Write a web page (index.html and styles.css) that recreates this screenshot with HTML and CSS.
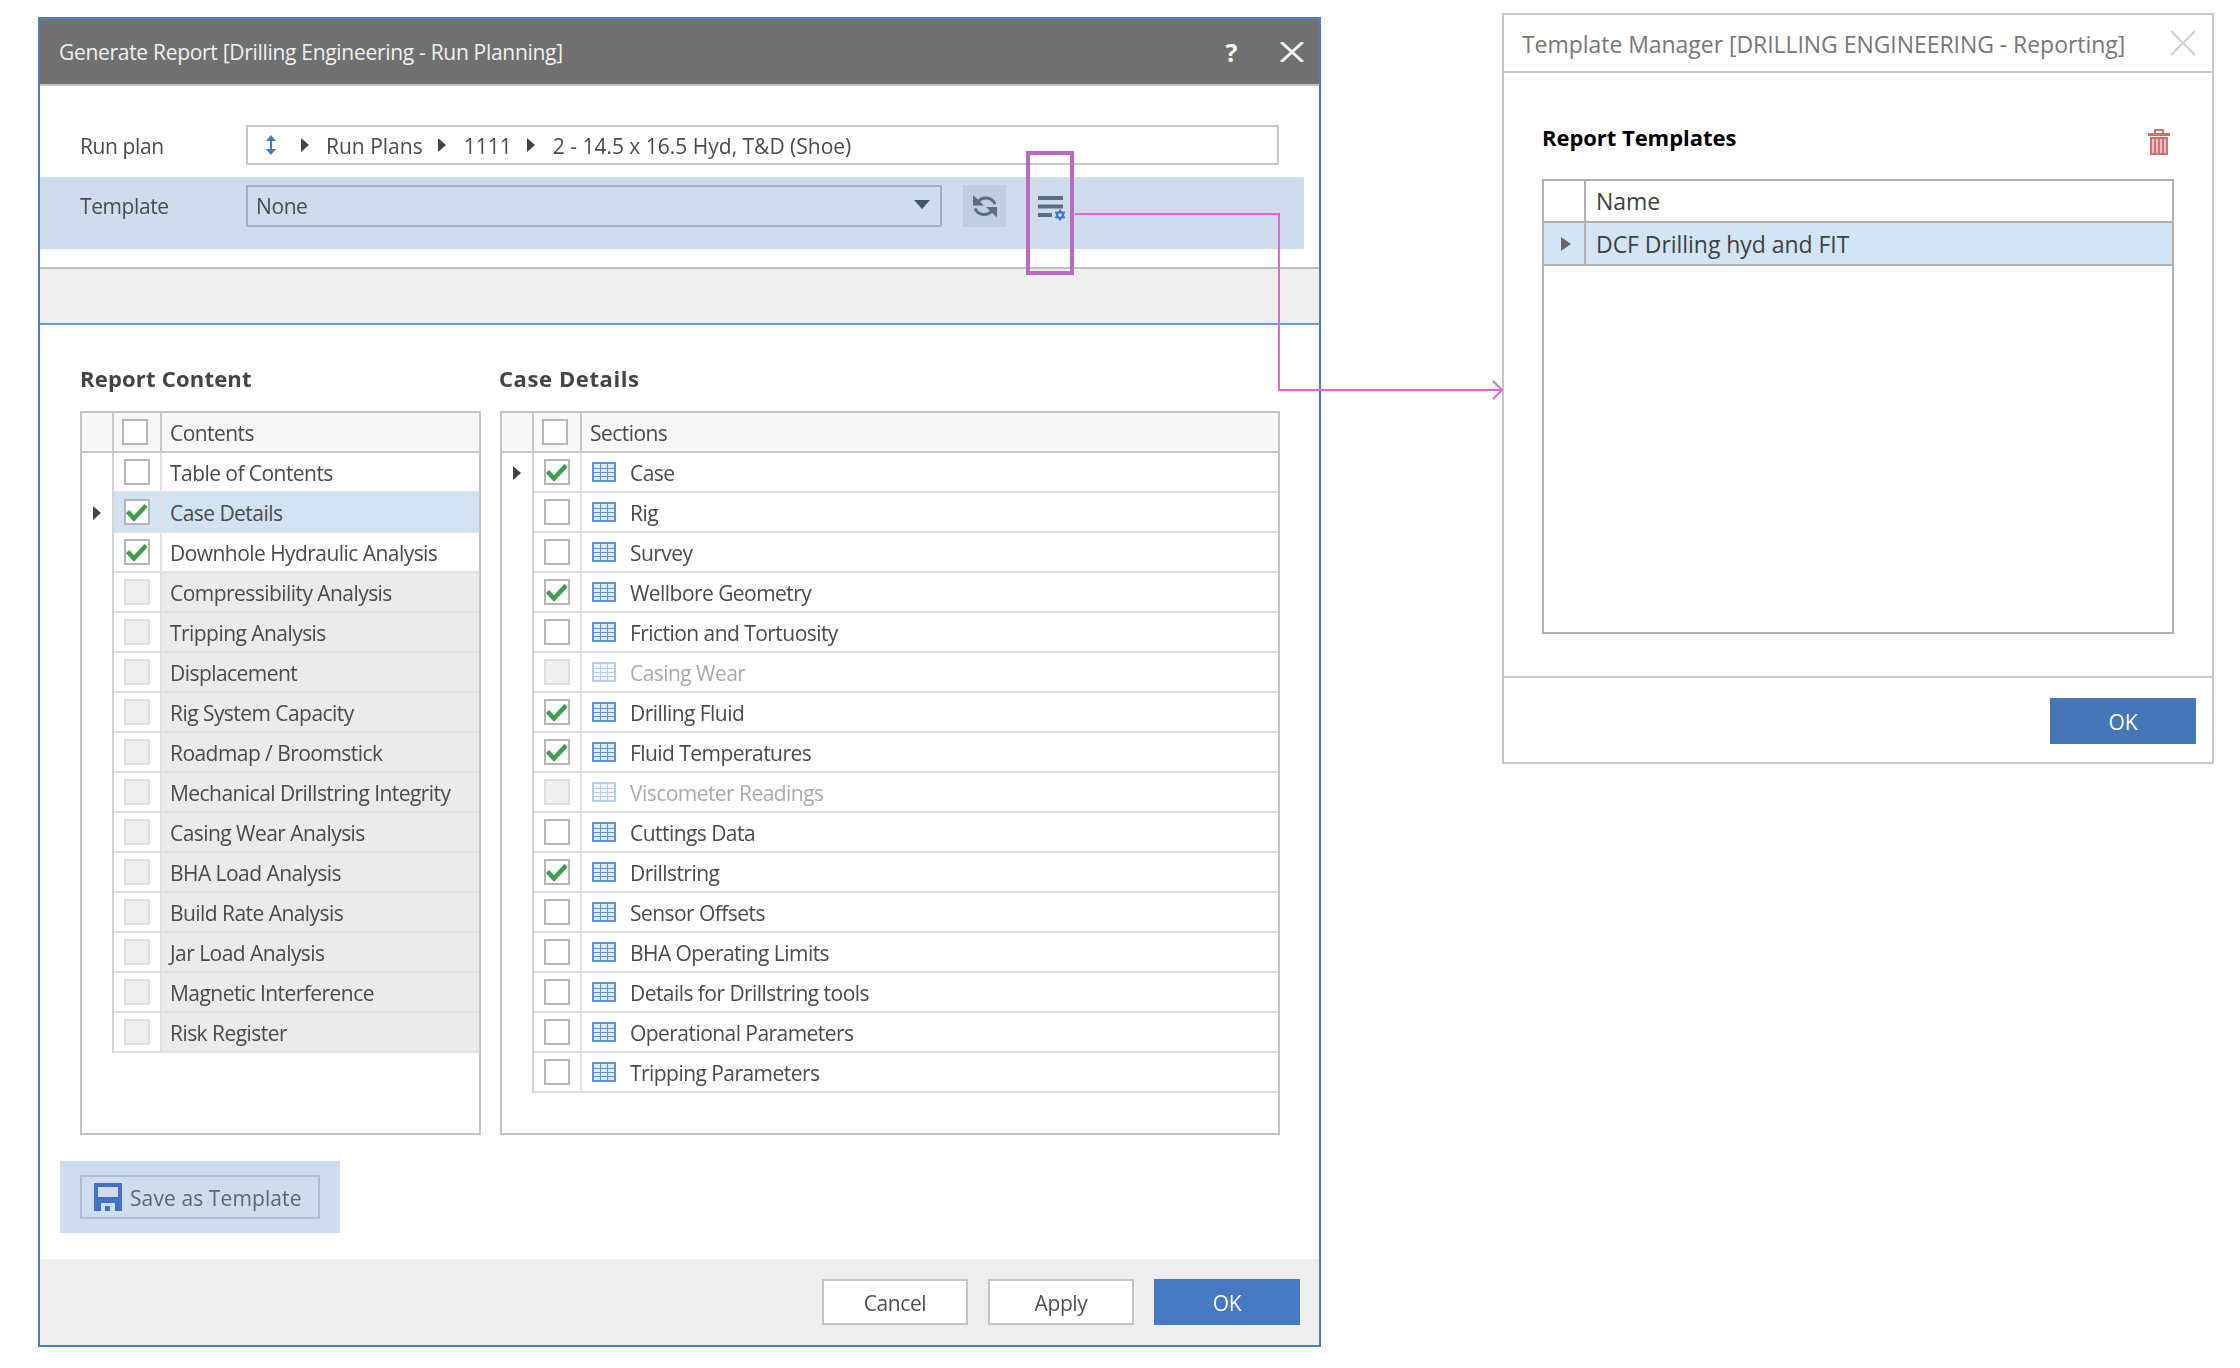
FILE: index.html
```html
<!DOCTYPE html>
<html lang="en">
<head>
    <meta charset="UTF-8">
    <title>Generate Report</title>
    <link rel="stylesheet" href="styles.css">
</head>
<body>
    <svg class="defs" width="0" height="0">
        <symbol id="table" viewBox="0 0 24 20">
            <rect x="0" y="0" width="24" height="20" fill="#5b92d8"/>
            <path d="M2 2h6v4H2zM9 2h6v4H9zM16 2h6v4h-6zM2 7h6v3H2zM9 7h6v3H9zM16 7h6v3h-6zM2 11h6v3H2zM9 11h6v3H9zM16 11h6v3h-6zM2 15h6v3H2zM9 15h6v3H9zM16 15h6v3h-6z" fill="#dfeafa"/>
        </symbol>
        <symbol id="tick" viewBox="0 0 22 22">
            <path d="M1.500 10.500L8 17.500 20 4.500" fill="none" stroke="#3f9e4e" stroke-width="4.500"/>
        </symbol>
    </svg>

    <div class="report-dialog">
        <div class="title-bar">
            <span class="title-text">Generate Report [Drilling Engineering - Run Planning]</span>
            <span class="help-btn">?</span>
            <svg class="close-btn" width="24" height="20" viewBox="0 0 24 20"><path d="M1 0l22 20M23 0L1 20" stroke="#f2f2f2" stroke-width="3" fill="none"/></svg>
        </div>

        <div class="run-row">
            <span class="field-label">Run plan</span>
            <div class="crumbs">
                <svg class="crumb-updown" width="12" height="20" viewBox="0 0 12 20"><path d="M6 0l5 6H7v8h4l-5 6-5-6h4V6H1z" fill="#3d7ad0"/></svg>
                <span class="crumb-arrow first"></span>
                <span class="crumb">Run Plans</span>
                <span class="crumb-arrow"></span>
                <span class="crumb">1111</span>
                <span class="crumb-arrow"></span>
                <span class="crumb">2 - 14.5 x 16.5 Hyd, T&amp;D (Shoe)</span>
            </div>
        </div>

        <div class="template-row">
            <span class="field-label">Template</span>
            <div class="combo"><span>None</span><i class="combo-arrow"></i></div>
            <div class="refresh-btn">
                <svg width="24" height="26" viewBox="0 0 24 26"><path d="M4.500 9.500A10 10 0 0 1 22 11M2 15.500A10 10 0 0 0 19.500 17" fill="none" stroke="#5d6d80" stroke-width="3"/><path d="M0 2V12.500H11ZM24 24.500V14H13Z" fill="#5d6d80"/></svg>
            </div>
            <div class="manage-btn">
                <svg width="30" height="26" viewBox="0 0 30 26"><path d="M1 3h25M1 11.500h25M1 20h14" stroke="#5d6d80" stroke-width="4" fill="none"/><path d="M23 14.500v11M18.200 17.200l9.600 5.600M18.200 22.800l9.600-5.600" stroke="#3d7ad0" stroke-width="2"/><circle cx="23" cy="20" r="4.200" fill="#3d7ad0"/><circle cx="23" cy="20" r="1.800" fill="#dce6f4"/></svg>
            </div>
        </div>

        <div class="info-band"></div>

        <div class="content">
            <div class="panels">
                <section class="panel panel-left">
                    <h3>Report Content</h3>
                    <div class="grid">
                        <div class="row head"><div class="cell-mark"></div><div class="cell-check"><span class="check"></span></div><div class="cell-label">Contents</div></div>
                        <div class="row"><div class="cell-mark"></div><div class="cell-check"><span class="check"></span></div><div class="cell-label">Table of Contents</div></div>
                        <div class="row selected"><div class="cell-mark"><i class="mark"></i></div><div class="cell-check"><span class="check"><svg width="22" height="22"><use href="#tick"/></svg></span></div><div class="cell-label">Case Details</div></div>
                        <div class="row"><div class="cell-mark"></div><div class="cell-check"><span class="check"><svg width="22" height="22"><use href="#tick"/></svg></span></div><div class="cell-label">Downhole Hydraulic Analysis</div></div>
                        <div class="row locked"><div class="cell-mark"></div><div class="cell-check"><span class="check"></span></div><div class="cell-label">Compressibility Analysis</div></div>
                        <div class="row locked"><div class="cell-mark"></div><div class="cell-check"><span class="check"></span></div><div class="cell-label">Tripping Analysis</div></div>
                        <div class="row locked"><div class="cell-mark"></div><div class="cell-check"><span class="check"></span></div><div class="cell-label">Displacement</div></div>
                        <div class="row locked"><div class="cell-mark"></div><div class="cell-check"><span class="check"></span></div><div class="cell-label">Rig System Capacity</div></div>
                        <div class="row locked"><div class="cell-mark"></div><div class="cell-check"><span class="check"></span></div><div class="cell-label">Roadmap / Broomstick</div></div>
                        <div class="row locked"><div class="cell-mark"></div><div class="cell-check"><span class="check"></span></div><div class="cell-label">Mechanical Drillstring Integrity</div></div>
                        <div class="row locked"><div class="cell-mark"></div><div class="cell-check"><span class="check"></span></div><div class="cell-label">Casing Wear Analysis</div></div>
                        <div class="row locked"><div class="cell-mark"></div><div class="cell-check"><span class="check"></span></div><div class="cell-label">BHA Load Analysis</div></div>
                        <div class="row locked"><div class="cell-mark"></div><div class="cell-check"><span class="check"></span></div><div class="cell-label">Build Rate Analysis</div></div>
                        <div class="row locked"><div class="cell-mark"></div><div class="cell-check"><span class="check"></span></div><div class="cell-label">Jar Load Analysis</div></div>
                        <div class="row locked"><div class="cell-mark"></div><div class="cell-check"><span class="check"></span></div><div class="cell-label">Magnetic Interference</div></div>
                        <div class="row locked"><div class="cell-mark"></div><div class="cell-check"><span class="check"></span></div><div class="cell-label">Risk Register</div></div>
                    </div>
                </section>

                <section class="panel panel-right">
                    <h3>Case Details</h3>
                    <div class="grid">
                        <div class="row head"><div class="cell-mark"></div><div class="cell-check"><span class="check"></span></div><div class="cell-label">Sections</div></div>
                        <div class="row"><div class="cell-mark"><i class="mark"></i></div><div class="cell-check"><span class="check"><svg width="22" height="22"><use href="#tick"/></svg></span></div><div class="cell-label"><svg class="table-icon" width="24" height="20"><use href="#table"/></svg>Case</div></div>
                        <div class="row"><div class="cell-mark"></div><div class="cell-check"><span class="check"></span></div><div class="cell-label"><svg class="table-icon" width="24" height="20"><use href="#table"/></svg>Rig</div></div>
                        <div class="row"><div class="cell-mark"></div><div class="cell-check"><span class="check"></span></div><div class="cell-label"><svg class="table-icon" width="24" height="20"><use href="#table"/></svg>Survey</div></div>
                        <div class="row"><div class="cell-mark"></div><div class="cell-check"><span class="check"><svg width="22" height="22"><use href="#tick"/></svg></span></div><div class="cell-label"><svg class="table-icon" width="24" height="20"><use href="#table"/></svg>Wellbore Geometry</div></div>
                        <div class="row"><div class="cell-mark"></div><div class="cell-check"><span class="check"></span></div><div class="cell-label"><svg class="table-icon" width="24" height="20"><use href="#table"/></svg>Friction and Tortuosity</div></div>
                        <div class="row faded"><div class="cell-mark"></div><div class="cell-check"><span class="check"></span></div><div class="cell-label"><svg class="table-icon" width="24" height="20"><use href="#table"/></svg>Casing Wear</div></div>
                        <div class="row"><div class="cell-mark"></div><div class="cell-check"><span class="check"><svg width="22" height="22"><use href="#tick"/></svg></span></div><div class="cell-label"><svg class="table-icon" width="24" height="20"><use href="#table"/></svg>Drilling Fluid</div></div>
                        <div class="row"><div class="cell-mark"></div><div class="cell-check"><span class="check"><svg width="22" height="22"><use href="#tick"/></svg></span></div><div class="cell-label"><svg class="table-icon" width="24" height="20"><use href="#table"/></svg>Fluid Temperatures</div></div>
                        <div class="row faded"><div class="cell-mark"></div><div class="cell-check"><span class="check"></span></div><div class="cell-label"><svg class="table-icon" width="24" height="20"><use href="#table"/></svg>Viscometer Readings</div></div>
                        <div class="row"><div class="cell-mark"></div><div class="cell-check"><span class="check"></span></div><div class="cell-label"><svg class="table-icon" width="24" height="20"><use href="#table"/></svg>Cuttings Data</div></div>
                        <div class="row"><div class="cell-mark"></div><div class="cell-check"><span class="check"><svg width="22" height="22"><use href="#tick"/></svg></span></div><div class="cell-label"><svg class="table-icon" width="24" height="20"><use href="#table"/></svg>Drillstring</div></div>
                        <div class="row"><div class="cell-mark"></div><div class="cell-check"><span class="check"></span></div><div class="cell-label"><svg class="table-icon" width="24" height="20"><use href="#table"/></svg>Sensor Offsets</div></div>
                        <div class="row"><div class="cell-mark"></div><div class="cell-check"><span class="check"></span></div><div class="cell-label"><svg class="table-icon" width="24" height="20"><use href="#table"/></svg>BHA Operating Limits</div></div>
                        <div class="row"><div class="cell-mark"></div><div class="cell-check"><span class="check"></span></div><div class="cell-label"><svg class="table-icon" width="24" height="20"><use href="#table"/></svg>Details for Drillstring tools</div></div>
                        <div class="row"><div class="cell-mark"></div><div class="cell-check"><span class="check"></span></div><div class="cell-label"><svg class="table-icon" width="24" height="20"><use href="#table"/></svg>Operational Parameters</div></div>
                        <div class="row"><div class="cell-mark"></div><div class="cell-check"><span class="check"></span></div><div class="cell-label"><svg class="table-icon" width="24" height="20"><use href="#table"/></svg>Tripping Parameters</div></div>
                    </div>
                </section>
            </div>

            <div class="save-band">
                <button class="save-btn">
                    <svg width="28" height="28" viewBox="0 0 28 28"><path d="M0 0h28v28H0z" fill="#4472c4"/><path d="M4 4h20v10H4z" fill="#cfdcee"/><path d="M7 20h14v8H7z" fill="#cfdcee"/><path d="M11 23h5v5h-5z" fill="#4472c4"/></svg>
                    <span>Save as Template</span>
                </button>
            </div>
        </div>

        <div class="dialog-footer">
            <button class="btn">Cancel</button>
            <button class="btn">Apply</button>
            <button class="btn btn-primary">OK</button>
        </div>
    </div>

    <div class="template-dialog">
        <div class="tm-header">
            <span class="tm-title">Template Manager [DRILLING ENGINEERING - Reporting]</span>
            <svg width="26" height="26" viewBox="0 0 26 26"><path d="M1 1l24 24M25 1L1 25" stroke="#cfcfcf" stroke-width="2" fill="none"/></svg>
        </div>
        <div class="tm-body">
            <div class="tm-heading">
                <h3>Report Templates</h3>
                <svg class="trash" width="22" height="26" viewBox="0 0 22 26"><path d="M7 4V1h8v3" fill="none" stroke="#d07070" stroke-width="2"/><path d="M0 4h22v3H0z" fill="#d07070"/><path d="M2 8h18v18H2z" fill="#d07070"/><path d="M5 10v14M9 10v14M13 10v14M17 10v14" stroke="#f3dcdc" stroke-width="1.500"/></svg>
            </div>
            <div class="tm-grid">
                <div class="tm-row"><div class="tm-mark"></div><div class="tm-cell">Name</div></div>
                <div class="tm-row selected"><div class="tm-mark"><i class="mark small"></i></div><div class="tm-cell">DCF Drilling hyd and FIT</div></div>
            </div>
        </div>
        <div class="tm-footer">
            <button class="btn btn-primary tm-ok">OK</button>
        </div>
    </div>

    <!-- callout from the manage button to the template manager -->
    <svg class="callout" width="2240" height="1368" viewBox="0 0 2240 1368">
        <rect x="1028" y="153" width="44" height="120" fill="none" stroke="#b76bc1" stroke-width="4"/>
        <path d="M1075 214H1279V390H1501M1493 381l9 9-9 9" fill="none" stroke="#e066d0" stroke-width="2"/>
    </svg>
</body>
</html>
```
FILE: styles.css
```css
* {
    box-sizing: border-box;
}
body {
    margin: 0;
    width: 2240px;
    height: 1368px;
    position: relative;
    display: flex;
    align-items: flex-start;
    overflow: hidden;
    background-color: #fff;
    font-family: "Open Sans", Arial, sans-serif;
    font-size: 21px;
    letter-spacing: -0.4px;
    color: #4a4a4a;
}
.defs {
    position: absolute;
}
h3 {
    margin: 0;
}

/* generate report window */
.report-dialog {
    width: 1283px;
    height: 1330px;
    margin: 17px 0 0 38px;
    border: 2px solid #4a7cc9;
    display: flex;
    flex-direction: column;
    filter: blur(0.6px);
}
.title-bar {
    height: 67px;
    flex: none;
    display: flex;
    align-items: center;
    padding: 0 15px 0 19px;
    background-color: #707070;
    border-bottom: 2px solid #c4c4c4;
    color: #f0f0f0;
}
.title-text {
    flex: 1;
    padding-top: 1px;
    letter-spacing: -0.3px;
}
.help-btn {
    font-weight: 700;
    font-size: 25px;
    color: #fff;
    margin-right: 43px;
}
.run-row {
    display: flex;
    align-items: center;
    height: 40px;
    margin-top: 39px;
    padding-left: 40px;
}
.field-label {
    width: 166px;
    flex: none;
    padding-top: 2px;
}
.crumbs {
    width: 1033px;
    height: 40px;
    display: flex;
    align-items: center;
    padding-left: 17px;
    letter-spacing: 0;
    border: 2px solid #c8c8c8;
}
.crumb {
    padding-top: 2px;
}
.crumb-arrow {
    width: 0;
    height: 0;
    margin: 0 18px 0 15px;
    border-left: 8px solid #444;
    border-top: 7px solid transparent;
    border-bottom: 7px solid transparent;
}
.crumb-arrow.first {
    margin: 0 17px 0 24px;
}
.template-row {
    display: flex;
    align-items: flex-start;
    width: 1264px;
    height: 72px;
    margin-top: 12px;
    padding: 8px 0 0 40px;
    background-color: #cfdcee;
}
.template-row .field-label {
    line-height: 42px;
    padding-top: 0;
}
.combo {
    width: 696px;
    height: 42px;
    display: flex;
    align-items: center;
    justify-content: space-between;
    padding: 0 10px 0 8px;
    border: 2px solid #9fb0c6;
}
.combo-arrow {
    width: 0;
    height: 0;
    margin-bottom: 4px;
    border-top: 9px solid #44546a;
    border-left: 8px solid transparent;
    border-right: 8px solid transparent;
}
.refresh-btn {
    width: 43px;
    height: 42px;
    margin-left: 21px;
    display: flex;
    align-items: center;
    justify-content: center;
    background-color: #c0cee0;
}
.manage-btn {
    margin: 10px 0 0 31px;
    line-height: 0;
}
.info-band {
    height: 58px;
    flex: none;
    margin-top: 18px;
    background-color: #eee;
    border-top: 2px solid #c0c0c0;
    border-bottom: 2px solid #6f9bd8;
}

/* lists */
.content {
    flex: 1;
    padding: 38px 0 0 40px;
}
.panels {
    display: flex;
    gap: 19px;
}
.panel h3 {
    font-size: 22px;
    line-height: 30px;
    letter-spacing: 0.2px;
    margin-bottom: 18px;
    color: #444;
}
.panel-left {
    width: 401px;
}
.panel-right {
    width: 780px;
}
.panel-right h3 {
    margin-left: -1px;
    letter-spacing: 0.6px;
}
.grid {
    height: 724px;
    border: 2px solid #c4c4c4;
}
.row {
    display: grid;
    grid-template-columns: 32px 48px 1fr;
    height: 40px;
}
.row.head {
    background-color: #f7f7f7;
}
.cell-mark {
    display: flex;
    align-items: center;
    justify-content: center;
    border-right: 2px solid #d4d4d4;
}
.cell-check {
    display: flex;
    align-items: center;
    justify-content: center;
    border-right: 2px solid #e0e0e0;
    border-bottom: 2px solid #e0e0e0;
}
.cell-label {
    display: flex;
    align-items: center;
    padding: 2px 0 0 8px;
    letter-spacing: -0.55px;
    white-space: nowrap;
    border-bottom: 2px solid #e0e0e0;
}
.cell-label .table-icon {
    margin-top: -2px;
}
.row.head .cell-mark,
.row.head .cell-check,
.row.head .cell-label {
    border-color: #c8c8c8;
}
.row.head .cell-mark {
    border-bottom: 2px solid #c8c8c8;
}
.check {
    width: 26px;
    height: 26px;
    display: flex;
    background-color: #fff;
    border: 2px solid #b5b5b5;
}
.row.head .check {
    margin-left: -4px;
}
.row.selected .cell-check,
.row.selected .cell-label {
    background-color: #d3e2f3;
}
.row.locked .cell-label {
    background-color: #ebebeb;
}
.row.locked .check,
.row.faded .check {
    background-color: #efefef;
    border-color: #dedede;
}
.row.faded .cell-label {
    color: #aaa;
}
.row.faded .table-icon {
    opacity: 0.45;
}
.table-icon {
    margin: 0 14px 0 2px;
    flex: none;
}
.mark {
    width: 0;
    height: 0;
    border-left: 8px solid #444;
    border-top: 7px solid transparent;
    border-bottom: 7px solid transparent;
}
.save-band {
    width: 280px;
    height: 72px;
    margin: 26px 0 0 -20px;
    padding: 14px 20px;
    background-color: #cfdcee;
}
.save-btn {
    width: 240px;
    height: 44px;
    display: flex;
    align-items: center;
    gap: 8px;
    padding: 0 0 0 12px;
    font: inherit;
    letter-spacing: 0.1px;
    color: #5a6675;
    background: transparent;
    border: 2px solid #aebbd0;
}
.save-btn span {
    padding-top: 2px;
}
.dialog-footer {
    height: 86px;
    flex: none;
    display: flex;
    justify-content: flex-end;
    gap: 20px;
    padding: 20px 19px 0 0;
    background-color: #eee;
}
.btn {
    width: 146px;
    height: 46px;
    padding: 2px 0 0;
    font: inherit;
    letter-spacing: inherit;
    color: #505050;
    background-color: #fff;
    border: 2px solid #c4c4c4;
}
.btn-primary {
    color: #fff;
    background-color: #4678c4;
    border: none;
}

/* template manager window */
.template-dialog {
    width: 712px;
    height: 751px;
    margin: 13px 0 0 181px;
    border: 2px solid #c8c8c8;
    display: flex;
    flex-direction: column;
    font-size: 23px;
    letter-spacing: -0.05px;
}
.tm-header {
    height: 58px;
    flex: none;
    display: flex;
    align-items: center;
    justify-content: space-between;
    padding: 0 16px 0 19px;
    border-bottom: 2px solid #c8c8c8;
}
.tm-title {
    padding-top: 1px;
    margin-left: -1px;
    color: #777;
}
.tm-body {
    height: 605px;
    flex: none;
    padding: 50px 38px 0;
    border-bottom: 2px solid #c8c8c8;
}
.tm-heading {
    height: 56px;
    display: flex;
    justify-content: space-between;
    align-items: flex-start;
    padding-right: 4px;
}
.tm-heading h3 {
    font-size: 22px;
    line-height: 30px;
    margin-top: -1px;
    color: #000;
}
.trash {
    margin-top: 6px;
}
.tm-grid {
    height: 455px;
    border: 2px solid #b0b0b0;
}
.tm-row {
    display: grid;
    grid-template-columns: 42px 1fr;
    height: 42px;
    border-bottom: 2px solid #b0b0b0;
    color: #404040;
}
.tm-row.selected {
    height: 43px;
    background-color: #d3e4f4;
}
.tm-mark {
    display: flex;
    align-items: center;
    justify-content: center;
    border-right: 2px solid #b0b0b0;
}
.mark.small {
    border-left: 10px solid #666;
    margin-left: 4px;
}
.tm-cell {
    display: flex;
    align-items: center;
    padding-left: 10px;
}
.tm-footer {
    flex: 1;
    display: flex;
    justify-content: flex-end;
    padding: 20px 16px 0 0;
}
.tm-ok {
    background-color: #4476b8;
    font-size: 21px;
}

/* callout */
.callout {
    position: absolute;
    left: 0;
    top: 0;
    pointer-events: none;
}
```
